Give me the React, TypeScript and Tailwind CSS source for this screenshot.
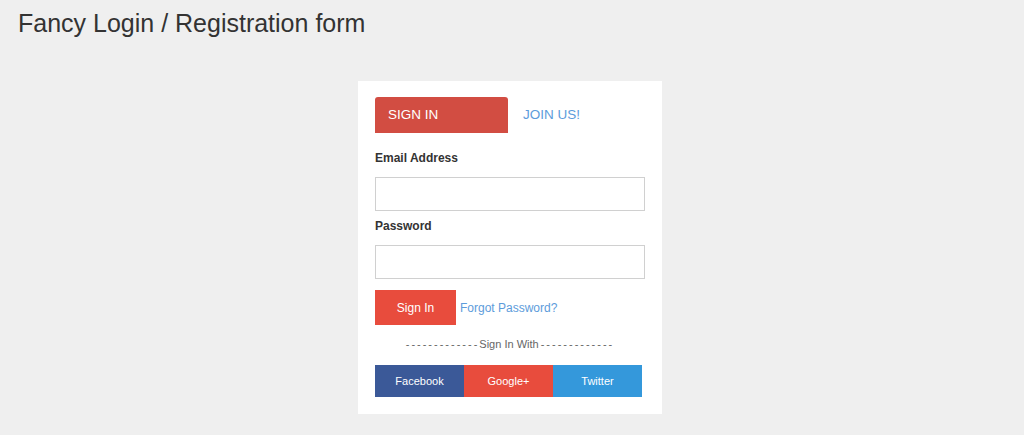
import { useState } from "react";

export default function App() {
  const [tab, setTab] = useState<"signin" | "join">("signin");
  const [email, setEmail] = useState("");
  const [password, setPassword] = useState("");

  return (
    <main
      className="min-h-screen bg-[#efefef] text-[#333]"
      style={{ fontFamily: '"Liberation Sans", Arial, sans-serif' }}
    >
      <h1 className="pl-[18px] pt-[9px] text-[25px] leading-[28px] font-normal text-[#333]">
        Fancy Login / Registration form
      </h1>

      <div className="mt-[44px] flex justify-center pr-[4px]">
        <div className="w-[304px] bg-white px-[17px] pt-[16px] pb-[17px]">
          <div className="flex items-center">
            <button
              type="button"
              onClick={() => setTab("signin")}
              className="h-[36px] w-[133px] rounded-t-[3px] bg-[#d24d42] pl-[13px] text-left text-[13.5px] text-white"
            >
              SIGN IN
            </button>
            <button
              type="button"
              onClick={() => setTab("join")}
              className="pl-[15px] text-[13.5px] text-[#5d9cdb]"
            >
              JOIN US!
            </button>
          </div>

          <form
            onSubmit={(e) => e.preventDefault()}
            className="mt-[17px]"
            data-tab={tab}
          >
            <label className="block text-[12px] leading-[17px] font-bold text-[#333]">
              Email Address
            </label>
            <input
              type="email"
              value={email}
              onChange={(e) => setEmail(e.target.value)}
              className="mt-[10px] block h-[34px] w-full border border-[#d0d0d0] bg-white px-2 text-[13px] outline-none"
            />

            <label className="mt-[7px] block text-[12px] leading-[17px] font-bold text-[#333]">
              Password
            </label>
            <input
              type="password"
              value={password}
              onChange={(e) => setPassword(e.target.value)}
              className="mt-[10px] block h-[34px] w-full border border-[#d0d0d0] bg-white px-2 text-[13px] outline-none"
            />

            <div className="mt-[11px] flex items-center">
              <button
                type="submit"
                className="h-[35px] w-[81px] bg-[#e84c3d] text-[12px] text-white"
              >
                Sign In
              </button>
              <a href="#" className="ml-[4px] text-[12px] text-[#5d9cdb]">
                Forgot Password?
              </a>
            </div>
          </form>

          <div className="mt-[11px] flex h-[16px] items-center justify-center text-[11px] leading-[16px] text-[#666]">
            <span className="tracking-[2px]">-------------</span>
            <span>Sign In With</span>
            <span className="ml-[2px] tracking-[2px]">-------------</span>
          </div>

          <div className="mt-[13px] flex">
            <button type="button" className="h-[32px] w-[89px] bg-[#3b5998] text-[11px] text-white">
              Facebook
            </button>
            <button type="button" className="h-[32px] w-[89px] bg-[#e84c3d] text-[11px] text-white">
              Google+
            </button>
            <button type="button" className="h-[32px] w-[89px] bg-[#3498db] text-[11px] text-white">
              Twitter
            </button>
          </div>
        </div>
      </div>
    </main>
  );
}
